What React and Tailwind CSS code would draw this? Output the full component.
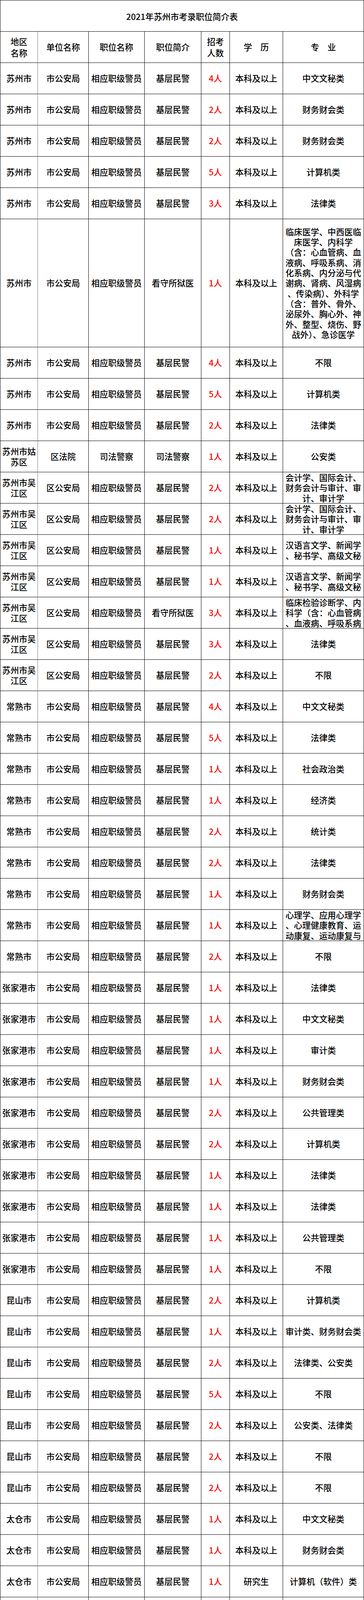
import React from "react";

const GRID = "grid grid-cols-[96px_130px_143px_145px_73px_136px_207px]";

const P = ["市公安局", "相应职级警员", "基层民警"];
const r = (area, num, major, edu = "本科及以上", unit = P[0], pos = P[1], desc = P[2]) => ({
  area, unit, pos, desc, num, edu, major,
});

const WJ = ["苏州市吴", "江区"];
const KJ = ["会计学、国际会计、", "财务会计与审计、审", "计、审计学"];
const HY = ["汉语言文学、新闻学", "、秘书学、高级文秘"];

const TALL = [
  "临床医学、中西医临",
  "床医学、内科学",
  "（含：心血管病、血",
  "液病、呼吸系病、消",
  "化系病、内分泌与代",
  "谢病、肾病、风湿病",
  "、传染病）、外科学",
  "（含：普外、骨外、",
  "泌尿外、胸心外、神",
  "外、整型、烧伤、野",
  "战外）、急诊医学",
];

const rows = [
  r("苏州市", "4人", "中文文秘类"),
  r("苏州市", "2人", "财务财会类"),
  r("苏州市", "2人", "财务财会类"),
  r("苏州市", "5人", "计算机类"),
  r("苏州市", "3人", "法律类"),
  { ...r("苏州市", "1人", TALL, "本科及以上", P[0], P[1], "看守所狱医"), tall: true },
  r("苏州市", "4人", "不限"),
  r("苏州市", "5人", "计算机类"),
  r("苏州市", "2人", "法律类"),
  r(["苏州市姑", "苏区"], "1人", "公安类", "本科及以上", "区法院", "司法警察", "司法警察"),
  r(WJ, "2人", KJ, "本科及以上", "区公安局"),
  r(WJ, "2人", KJ, "本科及以上", "区公安局"),
  r(WJ, "1人", HY, "本科及以上", "区公安局"),
  r(WJ, "1人", HY, "本科及以上", "区公安局"),
  r(WJ, "3人", ["临床检验诊断学、内", "科学（含：心血管病", "、血液病、呼吸系病"], "本科及以上", "区公安局", P[1], "看守所狱医"),
  r(WJ, "3人", "法律类", "本科及以上", "区公安局"),
  r(WJ, "2人", "不限", "本科及以上", "区公安局"),
  r("常熟市", "4人", "中文文秘类"),
  r("常熟市", "5人", "法律类"),
  r("常熟市", "1人", "社会政治类"),
  r("常熟市", "1人", "经济类"),
  r("常熟市", "2人", "统计类"),
  r("常熟市", "2人", "法律类"),
  r("常熟市", "1人", "财务财会类"),
  r("常熟市", "1人", ["心理学、应用心理学", "、心理健康教育、运", "动康复、运动康复与"]),
  r("常熟市", "2人", "不限"),
  r("张家港市", "1人", "法律类"),
  r("张家港市", "1人", "中文文秘类"),
  r("张家港市", "1人", "审计类"),
  r("张家港市", "1人", "财务财会类"),
  r("张家港市", "2人", "公共管理类"),
  r("张家港市", "2人", "计算机类"),
  r("张家港市", "1人", "法律类"),
  r("张家港市", "1人", "法律类"),
  r("张家港市", "1人", "公共管理类"),
  r("张家港市", "1人", "不限"),
  r("昆山市", "2人", "计算机类"),
  r("昆山市", "1人", "审计类、财务财会类"),
  r("昆山市", "2人", "法律类、公安类"),
  r("昆山市", "5人", "不限"),
  r("昆山市", "2人", "公安类、法律类"),
  r("昆山市", "2人", "不限"),
  r("昆山市", "2人", "不限"),
  r("太仓市", "1人", "中文文秘类"),
  r("太仓市", "1人", "财务财会类"),
  r("太仓市", "1人", "计算机（软件）类", "研究生"),
  r("太仓市", "3人", "计算机类"),
  r("太仓市", "1人", "交通工程类"),
  r("太仓市", "2人", "法律类、公安类"),
  r("太仓市", "3人", "法律类、公安类"),
  r("太仓市", "1人", "不限"),
];

function Lines({ v }) {
  if (Array.isArray(v)) {
    return (
      <div className="flex flex-col items-center">
        {v.map((t, i) => (
          <div key={i} className="whitespace-nowrap">
            {t}
          </div>
        ))}
      </div>
    );
  }
  return <div className="whitespace-nowrap">{v}</div>;
}

function Cell({ v, first, red, header }) {
  return (
    <div
      className={
        (first ? "border-r-[#7a7a7a] " : "border-r-black ") +
        (red ? "text-[#ff0000] " : "text-black ") +
        (header ? "leading-[28.5px] " : "leading-[26.3px] ") +
        "flex min-h-0 items-center justify-center overflow-hidden border-r border-b border-b-black text-center"
      }
    >
      <Lines v={v} />
    </div>
  );
}

function Row({ row }) {
  return (
    <div
      className={
        GRID +
        (row.tall ? " h-[328px] grid-rows-[328px]" : " h-[80px] grid-rows-[80px]") +
        " overflow-hidden"
      }
    >
      <Cell v={row.area} first />
      <Cell v={row.unit} />
      <Cell v={row.pos} />
      <Cell v={row.desc} />
      <Cell v={row.num} red />
      <Cell v={row.edu} />
      <Cell v={row.major} />
    </div>
  );
}

export default function App() {
  return (
    <div
      className="w-[931px] bg-white text-[21.5px] font-medium text-black"
      style={{ fontFamily: '"Noto Sans CJK SC", "Noto Sans", sans-serif' }}
    >
      <div className="border-l border-t border-black">
        <div className="flex h-[80px] items-center justify-center border-b border-r border-black pt-[4px]">
          2021年苏州市考录职位简介表
        </div>
        <div className={GRID + " h-[80px] grid-rows-[80px]"}>
          <Cell v={["地区", "名称"]} first header />
          <Cell v="单位名称" header />
          <Cell v="职位名称" header />
          <Cell v="职位简介" header />
          <Cell v={["招考", "人数"]} header />
          <Cell v="学　历" header />
          <Cell v="专　业" header />
        </div>
        {rows.map((row, i) => (
          <Row key={i} row={row} />
        ))}
      </div>
    </div>
  );
}
